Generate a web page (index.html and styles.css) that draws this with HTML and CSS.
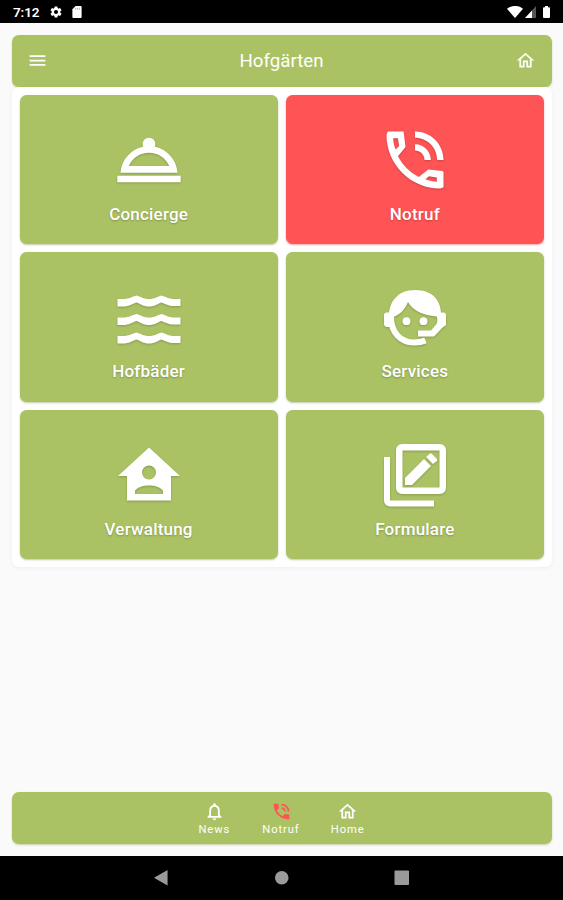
FILE: index.html
```html
<!DOCTYPE html>
<html lang="de">
<head>
  <meta charset="UTF-8" />
  <meta name="viewport" content="width=device-width, initial-scale=1.0"/>
  <title>Hofgärten</title>
  <link rel="stylesheet" href="styles.css">
</head>
<body>
  <!-- Status bar -->
  <div class="status-bar">
    <span class="time">7:12</span>
    <svg class="gear" viewBox="0 0 24 24"><path d="M19.14 12.94c.04-.3.06-.61.06-.94s-.02-.64-.07-.94l2.03-1.58a.5.5 0 0 0 .12-.61l-1.92-3.32a.5.5 0 0 0-.59-.22l-2.39.96a7 7 0 0 0-1.62-.94l-.36-2.54a.5.5 0 0 0-.48-.41h-3.84a.5.5 0 0 0-.47.41l-.36 2.54a7.4 7.4 0 0 0-1.62.94l-2.39-.96a.5.5 0 0 0-.59.22L2.74 8.87a.5.5 0 0 0 .12.61l2.03 1.58a6 6 0 0 0 0 1.88l-2.03 1.58a.5.5 0 0 0-.12.61l1.92 3.32c.12.22.37.29.59.22l2.39-.96c.5.38 1.03.7 1.62.94l.36 2.54c.05.24.24.41.48.41h3.84c.24 0 .44-.17.47-.41l.36-2.54a7 7 0 0 0 1.62-.94l2.39.96c.22.08.47 0 .59-.22l1.92-3.32a.5.5 0 0 0-.12-.61zM12 15.5a3.5 3.5 0 1 1 0-7 3.5 3.5 0 0 1 0 7z"/></svg>
    <svg class="sd" viewBox="0 0 10 13"><path d="M3.5 0H9a1 1 0 0 1 1 1v11a1 1 0 0 1-1 1H1a1 1 0 0 1-1-1V3.5z"/><path class="slots" d="M3.5 2v2M5.500 2v2M7.500 2v2"/></svg>
    <div class="status-right">
      <svg class="wifi" viewBox="0 0 16 12"><path d="M0 2.800C4.500-1 11.500-1 16 2.800L8 12z"/></svg>
      <svg class="signal" viewBox="0 0 11 12"><path class="dim" d="M11 0v12H0z"/><path d="M7 4.400V12H0z"/></svg>
      <svg class="battery" viewBox="0 0 7 12"><path d="M2 0h3v1.200h1a1 1 0 0 1 1 1V11a1 1 0 0 1-1 1H1a1 1 0 0 1-1-1V2.200a1 1 0 0 1 1-1h1z"/></svg>
    </div>
  </div>

  <!-- Main app -->
  <div class="app">
    <header class="header">
      <svg class="small-icon" viewBox="0 0 24 24"><path d="M3 18h18v-2H3zm0-5h18v-2H3zm0-7v2h18V6z"/></svg>
      <h1>Hofgärten</h1>
      <svg class="small-icon" viewBox="0 0 24 24"><path d="m12 5.690 5 4.500V18h-2v-6H9v6H7v-7.810zM12 3 2 12h3v8h6v-6h2v6h6v-8h3z"/></svg>
    </header>

    <main class="tiles">
      <div class="tile">
        <svg viewBox="0 0 24 24"><path d="M2 17h20v2H2zm11.840-9.210c.1-.24.16-.51.16-.79 0-1.100-.9-2-2-2s-2 .9-2 2c0 .28.06.55.16.79C6.250 8.600 3.270 11.930 3 16h18c-.27-4.070-3.250-7.400-7.160-8.210zM12 9.700c2.900 0 5.300 1.700 6.400 4.200h-12.800c1.100-2.500 3.500-4.200 6.400-4.200z"/></svg>
        <span>Concierge</span>
      </div>
      <div class="tile emergency">
        <svg viewBox="0 0 24 24"><path fill-rule="evenodd" d="M15 12h2c0-2.760-2.240-5-5-5v2c1.660 0 3 1.340 3 3zM19 12h2c0-4.970-4.030-9-9-9v2c3.870 0 7 3.130 7 7zM20.600 15.500L16.200 15L13.210 17.370A15.100 15.100 0 0 1 6.620 10.780L9 7.900L8.400 3H3.400L3 4C3 13.390 10.610 21 20 21L21 20.600V15.800zM5.100 5.100H6.600L7 7.600L5.900 8.700C5.400 7.500 5.150 6.300 5.100 5.100zM18.900 18.900C17.700 18.850 16.500 18.600 15.300 18.100L16.400 17.100L18.900 17.500z"/></svg>
        <span>Notruf</span>
      </div>
      <div class="tile">
        <svg viewBox="0 0 76 76">
          <defs><path id="wave" d="M6.500 0H12C18 0 21-2.500 25.500-3.500C30-2.500 32 0 38 0C44 0 46-2.500 50.500-3.500C55-2.500 57 0 64 0H69.500V7H64C58 7.500 55 5 50.500 3.500C46 5 44 7.500 38 7.500C32 7.500 30 5 25.500 3.500C21 5 18 7.500 12 7.500H6.500z"/></defs>
          <use href="#wave" y="19"/><use href="#wave" y="37.500"/><use href="#wave" y="56"/>
        </svg>
        <span>Hofbäder</span>
      </div>
      <div class="tile">
        <svg viewBox="0 0 76 76">
          <path d="M12 42C10 23 20 10 38 10C56 10 65 21 64 37L60.500 36.500C48 36 36 31 31 22C27 31 22 35 16 37V42z"/>
          <path class="line" d="M14 37C14 53 24 62.500 37 62.500C42 62.500 45 62 48.500 60.500"/>
          <path d="M7 34L9 32.500H15V47H9L7 45zM58 34L61 32.500H67L69 34V45L65 48L57 56.500H41V50.500H54L59.500 44C61 41 60.500 36 58 34z"/>
          <circle cx="29.500" cy="41.200" r="3.900"/><circle cx="46.500" cy="41.200" r="3.900"/>
        </svg>
        <span>Services</span>
      </div>
      <div class="tile">
        <svg viewBox="0 0 76 76"><path fill-rule="evenodd" d="M38 10.500L69 39H60V63.500H16V39H7zM38 28.500A7 7 0 1 0 38 42.500A7 7 0 1 0 38 28.500zM24 57H52V54C49 46.500 27 46.500 24 54z"/></svg>
        <span>Verwaltung</span>
      </div>
      <div class="tile">
        <svg viewBox="0 0 76 76">
          <path fill-rule="evenodd" d="M25 7H63A6 6 0 0 1 69 13V51A6 6 0 0 1 63 57H25A6 6 0 0 1 19 51V13A6 6 0 0 1 25 7zM25.500 13.500V50.500H62.500V13.500z"/>
          <path d="M7 20H13V63.500H57V69.500H13A6 6 0 0 1 7 63.500zM28 48V41L47 22L54 29L35 48zM49 20L53 16.500Q54 16 55 17L60 22Q60.500 23 60 24L56 27z"/>
        </svg>
        <span>Formulare</span>
      </div>
    </main>

    <nav class="tabs">
      <div class="tab">
        <svg class="small-icon" viewBox="0 0 24 24"><path d="M12 22c1.100 0 2-.9 2-2h-4c0 1.100.9 2 2 2zm6-6v-5c0-3.070-1.630-5.640-4.500-6.320V4a1.500 1.500 0 0 0-3 0v.68C7.640 5.360 6 7.920 6 11v5l-2 2v1h16v-1zm-2 1H8v-6c0-2.480 1.510-4.500 4-4.500s4 2.020 4 4.500z"/></svg>
        <span>News</span>
      </div>
      <div class="tab">
        <svg class="small-icon red" viewBox="0 0 24 24"><path d="M20 15.500c-1.250 0-2.450-.2-3.570-.57a1 1 0 0 0-1.020.24l-2.200 2.200a15 15 0 0 1-6.590-6.590l2.200-2.210a1 1 0 0 0 .25-1A11.400 11.400 0 0 1 8.500 4c0-.55-.45-1-1-1H4c-.55 0-1 .45-1 1 0 9.390 7.610 17 17 17 .55 0 1-.45 1-1v-3.500c0-.55-.45-1-1-1zM19 12h2a9 9 0 0 0-9-9v2c3.870 0 7 3.130 7 7zm-4 0h2c0-2.760-2.240-5-5-5v2c1.660 0 3 1.340 3 3z"/></svg>
        <span>Notruf</span>
      </div>
      <div class="tab">
        <svg class="small-icon" viewBox="0 0 24 24"><path d="m12 5.690 5 4.500V18h-2v-6H9v6H7v-7.810zM12 3 2 12h3v8h6v-6h2v6h6v-8h3z"/></svg>
        <span>Home</span>
      </div>
    </nav>
  </div>

  <!-- Android navigation -->
  <div class="android-nav">
    <svg viewBox="0 0 16 16"><path d="M15 0v16L1 8z"/></svg>
    <svg viewBox="0 0 16 16"><circle cx="8" cy="8" r="7"/></svg>
    <svg viewBox="0 0 16 16"><rect x=".5" y=".5" width="15" height="15" rx="1"/></svg>
  </div>
</body>
</html>
```
FILE: styles.css
```css
* {
  box-sizing: border-box;
}
body {
  margin: 0;
  height: 900px;
  display: flex;
  flex-direction: column;
  font-family: Roboto, sans-serif;
  background: #fafafa;
  color: white;
}
svg {
  display: block;
  fill: currentColor;
  flex: none;
}
.status-bar {
  height: 22.5px;
  background: black;
  display: flex;
  align-items: center;
  padding: 2px 13px 0 13px;
}
.time {
  font-size: 13.5px;
  font-weight: 600;
  letter-spacing: -.1px;
  width: 36px;
}
.gear {
  width: 14px;
  height: 14px;
}
.sd {
  width: 10px;
  height: 12px;
  margin-left: 9px;
}
.slots {
  stroke: #777;
  stroke-width: .6;
}
.status-right {
  display: flex;
  margin-left: auto;
}
.wifi {
  width: 16px;
  height: 12px;
}
.signal {
  width: 11px;
  height: 12px;
  margin: 0 7px 0 2px;
}
.dim {
  fill: #555;
}
.battery {
  width: 7px;
  height: 12px;
}
.app {
  flex: 1;
  display: flex;
  flex-direction: column;
  padding: 12px 11.5px 11.5px 12px;
}
.header {
  height: 52px;
  display: flex;
  align-items: center;
  justify-content: space-between;
  padding: 0 15.5px 0 15px;
  background: #abc264;
  border-radius: 7px;
  box-shadow: 0 1px 2px rgba(120, 145, 50, 0.35);
}
.header h1 {
  margin: 0;
  font-size: 18.7px;
  font-weight: 400;
}
.small-icon {
  width: 21px;
  height: 21px;
}
.tiles {
  display: grid;
  grid-template-columns: 1fr 1fr;
  grid-auto-rows: 149.5px;
  gap: 8px;
  padding: 8px 7.5px 7.5px;
  background: white;
  border-radius: 7px;
  box-shadow: 0 1px 5px rgba(0, 0, 0, 0.05);
}
.tile {
  display: flex;
  flex-direction: column;
  align-items: center;
  padding-top: 27.5px;
  background: #abc264;
  border-radius: 6.5px;
  box-shadow: 0 1px 2px rgba(100, 125, 30, 0.4);
  font-size: 17px;
  line-height: 20px;
  font-weight: 500;
  letter-spacing: .2px;
  text-shadow: 0 1px 2px rgba(0, 0, 0, 0.25);
}
.tile svg {
  width: 76px;
  height: 76px;
  margin-bottom: 5.5px;
  filter: drop-shadow(0 1px 1px rgba(0, 0, 0, 0.2));
}
.emergency {
  background: #ff5456;
  box-shadow: 0 1px 2px rgba(200, 30, 30, 0.4);
}
.line {
  fill: none;
  stroke: white;
  stroke-width: 6;
}
.tabs {
  height: 52px;
  margin-top: auto;
  display: flex;
  justify-content: center;
  padding: 9px 1.5px 0 0;
  background: #abc264;
  border-radius: 7px;
  box-shadow: 0 1px 2px rgba(120, 145, 50, 0.4);
}
.tab {
  width: 66.7px;
  display: flex;
  flex-direction: column;
  align-items: center;
  font-size: 11.2px;
  line-height: 15px;
  letter-spacing: .9px;
}
.red {
  color: #ff5456;
}
.android-nav {
  height: 44.5px;
  display: flex;
  justify-content: center;
  align-items: center;
  gap: 105px;
  background: black;
  color: #9a9a9a;
}
.android-nav svg {
  width: 15.5px;
  height: 15.5px;
}
```
